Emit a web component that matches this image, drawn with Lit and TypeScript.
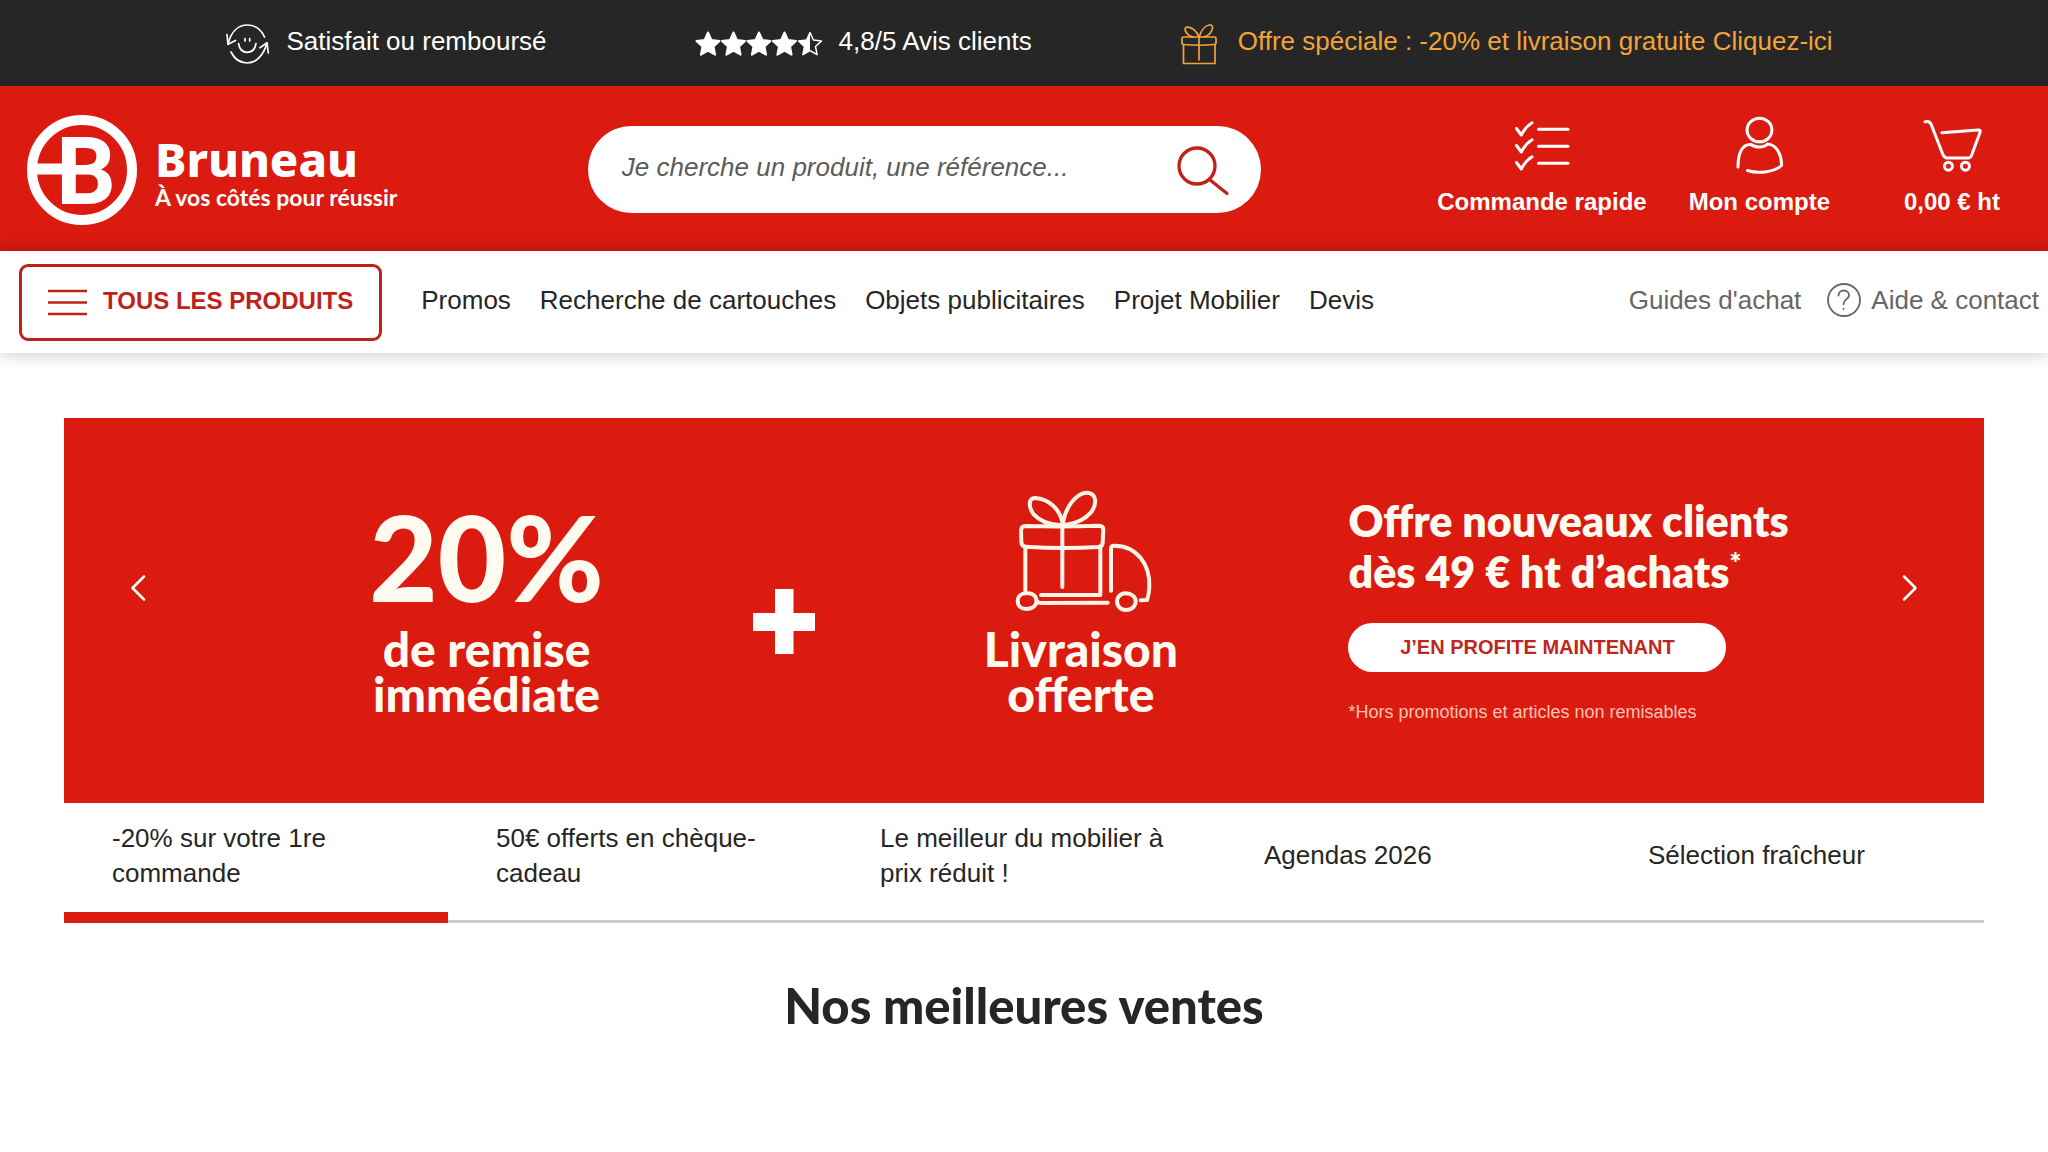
import { LitElement, html, css, svg } from "lit";
import { customElement, state } from "lit/decorators.js";
import { classMap } from "lit/directives/class-map.js";

const NAV_LINKS = ["Promos", "Recherche de cartouches", "Objets publicitaires", "Projet Mobilier", "Devis"];

const SLIDES = [
  "-20% sur votre 1re commande",
  "50€ offerts en chèque-cadeau",
  "Le meilleur du mobilier à prix réduit !",
  "Agendas 2026",
  "Sélection fraîcheur",
];

const STAR = "M13 1.5 16.4 9l8.1.9-6 5.6 1.6 8.2-7.1-4-7.1 4 1.6-8.2-6-5.6L9.600 9z";

const stars = html`<svg class="stars" viewBox="0 0 128 26" role="img" aria-label="4,5 étoiles sur 5">
  ${[0, 1, 2, 3].map((i) => svg`<path transform="translate(${i * 25.5} 0)" d=${STAR} fill="#fff" stroke="#fff" stroke-width="2" stroke-linejoin="round"/>`)}
  <g transform="translate(102 0)">
    <path d=${STAR} fill="none" stroke="#fff" stroke-width="1.5" stroke-linejoin="round" />
    <path d="M13 1.500V19.700l-7.100 4 1.600-8.200-6-5.600L9.600 9z" fill="#fff" />
  </g>
</svg>`;

const smileIcon = html`<svg class="smile" viewBox="25 22 45 42" fill="none" stroke="#fff" stroke-width="1.700" stroke-linecap="round" stroke-linejoin="round" aria-hidden="true">
  <path d="M64.500 36C61 28.500 54.500 24 47.300 24 38 24 31 31 28 43" />
  <path d="M27 33.500 28 43.300 35.500 39.500" />
  <path d="M31 51C34.500 58 40.500 62 47.300 62 56 62 63.500 54.500 67 42" />
  <path d="M60 46.700 67 41.800 68.300 52" />
  <path d="M38.500 42.500C39.500 48.500 43 51.300 47.300 51.300S55 48.500 56 42.500" />
  <path d="M45 37.500v2.500M49.700 37.500v2.500" />
</svg>`;

const giftIcon = html`<svg class="gift" viewBox="504 22 38 42" fill="none" stroke="currentColor" stroke-width="1.700" stroke-linecap="round" stroke-linejoin="round" aria-hidden="true">
  <path d="M508 36h30.500q1.500 0 1.500 1.500v4.500q0 1.500-2 1.500-15 1.500-30.500 0-1.500 0-1.500-1.500v-4.500q0-1.500 1.500-1.500z" />
  <path d="M507.500 43.700v18.800h31.500V43.700M523 36v23" />
  <path d="M522.800 36C521 30 516 26.500 511.500 26.200 508.800 26 508.500 28.500 510 31c2 3.200 5 5 8 5M523.200 36C525 29.500 529 24.500 533.500 24c3-.3 3.700 2 2.500 5-1.300 3.500-4.500 6-8 7" />
</svg>`;

const quickIcon = html`<svg class="action-icon" viewBox="113 28 60 60" fill="none" stroke="#fff" stroke-width="3" stroke-linecap="round" stroke-linejoin="round" aria-hidden="true">
  ${[0, 17, 34].map((y) => svg`<path transform="translate(0 ${y})" d="M117.500 41.500 122.300 48C125 42.500 128.500 38.500 133 35.800M139.500 42.300h29.500"/>`)}
</svg>`;

const accountIcon = html`<svg class="action-icon" viewBox="330 28 60 60" fill="none" stroke="#fff" stroke-width="3" stroke-linecap="round" stroke-linejoin="round" aria-hidden="true">
  <ellipse cx="360.500" cy="43" rx="12.400" ry="11.800" />
  <path d="M339 80C339 68 342 57 352 57.500 356 60.800 365 61 368.500 57 378 57.500 382.500 68 382.600 78.500 376 84.500 360 87.500 348.500 83.500" />
</svg>`;

const cartIcon = html`<svg class="action-icon" viewBox="522 28 60 60" fill="none" stroke="#fff" stroke-width="3" stroke-linecap="round" stroke-linejoin="round" aria-hidden="true">
  <path d="M525 34.800C528 34 530 34.300 531.200 37.500L542.500 66.500Q544 71 547.500 71H568Q570.500 71 571.500 68.500L580 45.500Q581 42.800 578 42.900L541.800 45.700" />
  <circle cx="548.400" cy="79.200" r="4" /><circle cx="565.400" cy="79.200" r="4" />
</svg>`;

const truckIcon = html`<svg class="truck" viewBox="225 58 420 372" fill="none" stroke="#fff4e6" stroke-width="12" stroke-linecap="round" stroke-linejoin="round" aria-hidden="true">
  <path d="M260 169Q370 172 480 168 493 168 493 180L491 220Q490 231 478 232 370 238 260 231 248 230 247 218L246 184Q246 169 260 169z" />
  <path d="M259 234V368M484 234V376H306M370 165V352" />
  <path d="M370 158C362 118 330 88 288 85 267 86 268 114 285 135 302 154 330 164 362 166" />
  <path d="M372 158C380 112 412 68 446 69 474 72 474 104 456 128 438 150 410 162 378 166" />
  <path d="M516 363V236Q516 228 526 228C592 228 634 284 631 352Q630 374 624 391L605 392" />
  <path d="M296 396Q300 401 312 400L506 399" />
  <path d="M262 371C282 370 293 379 292 396 291 410 278 418 262 418 246 418 236 408 236 394 236 380 246 371 262 371z" />
  <path d="M560 371C578 371 590 382 590 395 590 410 578 421 561 421 545 421 534 410 534 395 534 382 544 371 560 371z" />
</svg>`;

@customElement("app-root")
export class AppRoot extends LitElement {
  @state() private slide = 0;

  static styles = css`
    :host {
      display: block;
      min-height: 100vh;
      background: #fff;
      color: #262626;
      font-family: "Liberation Sans", Arial, sans-serif;
      font-size: 26px;
      line-height: 36px;
    }
    * { box-sizing: border-box; }
    a { color: inherit; text-decoration: none; white-space: nowrap; }
    button { font: inherit; color: inherit; background: none; border: 0; padding: 0; cursor: pointer; }
    svg { display: block; flex: none; overflow: visible; }
    h1, h2, p { margin: 0; }

    .promises {
      display: flex;
      justify-content: center;
      gap: 148px;
      height: 86px;
      padding: 0 0 4px 10px;
      background: #262626;
      color: #fff;
    }
    .promise { display: flex; align-items: center; gap: 16px; }
    .promise-icon { padding-top: 5px; }
    .offer { color: #f2a33a; gap: 20px; }
    .smile { width: 45px; height: 42px; }
    .stars { width: 128px; height: 26px; }
    .gift { width: 38px; height: 42px; }

    .header {
      display: grid;
      grid-template-columns: 5fr 6fr 7fr;
      align-items: center;
      height: 165px;
      padding: 2px 2px 0 27px;
      background: #db1a10;
      color: #fff;
    }
    .logo { display: flex; align-items: center; gap: 18px; }
    .logo-mark { width: 110px; height: 110px; }
    .logo-letter { font: 700 94px Roboto, "Open Sans", sans-serif; }
    .logo-text { display: flex; flex-direction: column; padding-top: 6px; }
    .logo-name { font: 800 47px/48px "Noto Sans", "Open Sans", sans-serif; }
    .logo-tag { font: 700 23px/28px Lato, sans-serif; }

    .search {
      display: flex;
      align-items: center;
      height: 87px;
      padding: 0 30px 0 34px;
      border-radius: 44px;
      background: #fff;
    }
    .search-input {
      flex: 1;
      min-width: 0;
      height: 60px;
      padding: 0 0 4px;
      border: 0;
      outline: 0;
      background: none;
      color: #262626;
      font: italic 26px/36px "Liberation Sans", Arial, sans-serif;
    }
    .search-input::placeholder { color: #5c5c5c; opacity: 1; }
    .search-icon { width: 56px; height: 52px; }

    .actions { display: flex; justify-content: flex-end; gap: 42px; padding: 0 14px 8px 0; }
    .action {
      display: flex;
      flex-direction: column;
      align-items: center;
      gap: 13px;
      font-size: 24px;
      line-height: 28px;
      font-weight: 700;
    }
    .cart { width: 160px; }
    .action-icon { width: 60px; height: 60px; }

    .nav {
      position: relative;
      display: flex;
      align-items: center;
      height: 102px;
      padding: 0 9px 0 19px;
      background: #fff;
      box-shadow: 0 0 16px rgba(0, 0, 0, 0.25);
    }
    .all-products {
      display: flex;
      align-items: center;
      gap: 16px;
      height: 77px;
      padding: 0 26px;
      border: 3px solid #c0221a;
      border-radius: 9px;
      color: #c0221a;
      font-size: 24px;
      font-weight: 700;
      white-space: nowrap;
    }
    .all-label { padding-bottom: 3px; }
    .burger { width: 39px; height: 27px; }
    .links { display: flex; gap: 29px; padding: 0 0 4px 39px; }
    .help { display: flex; align-items: center; gap: 26px; margin-left: auto; padding-bottom: 4px; color: #666; }
    .help-link { display: flex; align-items: center; gap: 10px; }
    .help-icon { width: 34px; height: 34px; }

    .main { padding: 65px 64px 0; }
    .hero {
      display: flex;
      align-items: center;
      height: 385px;
      padding: 0 62px;
      background: #db1a10;
      color: #fffaf0;
    }
    .arrow { display: flex; justify-content: center; align-items: center; width: 24px; height: 48px; margin-bottom: 46px; }
    .arrow-icon { width: 16px; height: 28px; }
    .banner {
      flex: 1;
      display: grid;
      grid-template-columns: 4fr 4fr 4fr 9fr;
      padding-left: 188px;
      font-family: Lato, Inter, sans-serif;
      font-weight: 900;
    }
    .perk {
      display: flex;
      flex-direction: column;
      align-items: center;
      justify-content: flex-end;
      padding-bottom: 16px;
      font-size: 48px;
      line-height: 45px;
      text-align: center;
      white-space: nowrap;
    }
    .percent { margin-bottom: 10px; font-size: 118px; line-height: 118px; }
    .plus { width: 62px; height: 65px; align-self: center; justify-self: center; margin-top: 22px; }
    .truck { width: 140px; height: 124px; margin: 0 0 13px 6px; }
    .deal {
      display: flex;
      flex-direction: column;
      align-items: flex-start;
      align-self: center;
      padding: 0 0 2px 119px;
      white-space: nowrap;
    }
    .deal-title { font-size: 43px; line-height: 51px; font-weight: 800; }
    .star-mark { font-size: 28px; line-height: 28px; vertical-align: super; }
    .cta {
      width: 378px;
      height: 49px;
      margin: 26px 0 28px;
      border-radius: 25px;
      background: #fff;
      color: #c0261c;
      font: 700 20px/49px "Liberation Sans", sans-serif;
      text-align: center;
    }
    .footnote { font: 18px/24px "Liberation Sans", sans-serif; color: #fcc5b2; }

    .tabs { display: grid; grid-template-columns: repeat(5, 1fr); height: 120px; }
    .tab {
      display: flex;
      align-items: center;
      padding: 0 48px 12px;
      border-bottom: 3px solid #ccc;
      line-height: 35px;
      text-align: left;
    }
    .tab.active { border-bottom: 11px solid #db1a10; padding-bottom: 4px; }
    .best {
      padding-top: 52px;
      font: 900 49px/60px Lato, Inter, sans-serif;
      text-align: center;
    }
  `;

  private move(step: number) {
    this.slide = (this.slide + step + SLIDES.length) % SLIDES.length;
  }

  render() {
    return html`
      <div class="promises">
        <div class="promise"><span class="promise-icon">${smileIcon}</span><span>Satisfait ou remboursé</span></div>
        <div class="promise"><span class="promise-icon">${stars}</span><span>4,8/5 Avis clients</span></div>
        <a class="promise offer" href="#offre"><span class="promise-icon">${giftIcon}</span><span>Offre spéciale : -20% et livraison gratuite Cliquez-ici</span></a>
      </div>

      <header class="header">
        <a class="logo" href="#accueil">
          <svg class="logo-mark" viewBox="0 0 110 110" aria-hidden="true">
            <circle cx="55" cy="55" r="50" fill="none" stroke="#fff" stroke-width="10" />
            <path d="M8 48.500h32v11H8z" fill="#fff" />
            <text class="logo-letter" x="29" y="89" fill="#fff">B</text>
          </svg>
          <span class="logo-text">
            <span class="logo-name">Bruneau</span>
            <span class="logo-tag">À vos côtés pour réussir</span>
          </span>
        </a>
        <form class="search" role="search" @submit=${(e: Event) => e.preventDefault()}>
          <input class="search-input" type="search" aria-label="Rechercher" placeholder="Je cherche un produit, une référence..." />
          <button type="submit" aria-label="Lancer la recherche">
            <svg class="search-icon" viewBox="0 0 56 52" fill="none" stroke="#c0221a" stroke-width="3.300" stroke-linecap="round">
              <circle cx="22" cy="22" r="18" /><path d="M34.500 35.500 52 49.500" />
            </svg>
          </button>
        </form>
        <div class="actions">
          <a class="action" href="#commande">${quickIcon}<span>Commande rapide</span></a>
          <a class="action" href="#compte">${accountIcon}<span>Mon compte</span></a>
          <a class="action cart" href="#panier">${cartIcon}<span>0,00 € ht</span></a>
        </div>
      </header>

      <nav class="nav">
        <button class="all-products" type="button">
          <svg class="burger" viewBox="0 0 39 27" stroke="#c0221a" stroke-width="2.500" aria-hidden="true"><path d="M0 2h39M0 13.500h39M0 25h39" /></svg>
          <span class="all-label">TOUS LES PRODUITS</span>
        </button>
        <div class="links">${NAV_LINKS.map((l) => html`<a href="#">${l}</a>`)}</div>
        <div class="help">
          <a href="#guides">Guides d'achat</a>
          <a class="help-link" href="#aide">
            <svg class="help-icon" viewBox="0 0 34 34" fill="none" stroke="#666" stroke-width="1.800" stroke-linecap="round" aria-hidden="true">
              <circle cx="17" cy="17" r="16" />
              <path d="M11.500 12.500C11.500 9.500 13.800 7.500 16.800 7.500S22 9.400 22 12.200C22 16 16.500 16.500 16.500 21.200M16.500 25.700v.3" />
            </svg>
            <span>Aide &amp; contact</span>
          </a>
        </div>
      </nav>

      <main class="main">
        <section class="hero">
          <button class="arrow" type="button" aria-label="Précédent" @click=${() => this.move(-1)}>
            <svg class="arrow-icon" viewBox="0 0 16 28" fill="none" stroke="#fff" stroke-width="2.500" stroke-linecap="round" stroke-linejoin="round"><path d="M14 2.500 2.500 14 14 25.500" /></svg>
          </button>
          <div class="banner">
            <div class="perk"><span class="percent">20%</span><span>de remise</span><span>immédiate</span></div>
            <svg class="plus" viewBox="0 0 62 65" aria-hidden="true"><path d="M22 0h18.500v24H62v18H40.500v23H22V42H0V24h22z" fill="#fff" /></svg>
            <div class="perk">${truckIcon}<span>Livraison</span><span>offerte</span></div>
            <div class="deal">
              <p class="deal-title">Offre nouveaux clients<br />dès 49 € ht d’achats<span class="star-mark">*</span></p>
              <a class="cta" href="#profiter">J’EN PROFITE MAINTENANT</a>
              <p class="footnote">*Hors promotions et articles non remisables</p>
            </div>
          </div>
          <button class="arrow" type="button" aria-label="Suivant" @click=${() => this.move(1)}>
            <svg class="arrow-icon" viewBox="0 0 16 28" fill="none" stroke="#fff" stroke-width="2.500" stroke-linecap="round" stroke-linejoin="round"><path d="M2 2.500 13.500 14 2 25.500" /></svg>
          </button>
        </section>
        <div class="tabs">
          ${SLIDES.map((s, i) => html`<button type="button" class=${classMap({ tab: true, active: i === this.slide })} @click=${() => (this.slide = i)}>${s}</button>`)}
        </div>
        <h2 class="best">Nos meilleures ventes</h2>
      </main>
    `;
  }
}
